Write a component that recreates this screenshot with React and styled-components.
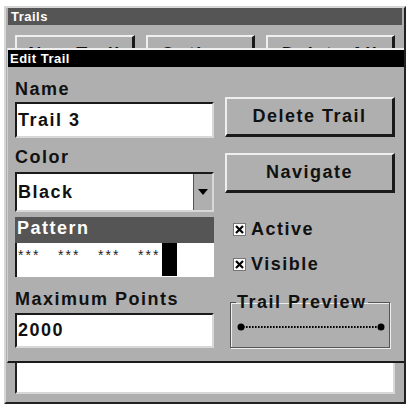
import React from 'react';
import styled, { createGlobalStyle } from 'styled-components';

const GlobalStyle = createGlobalStyle`
  body {
    margin: 0;
    background: #ffffff;
    font-family: 'Liberation Sans', Arial, sans-serif;
    color: #111;
  }
`;

const Window = styled.div`
  position: relative;
  box-sizing: border-box;
  margin: 6px 0 0 4px;
  width: 402px;
  height: 398px;
  background: #afafaf;
  border: 2px solid;
  border-color: #d6d6d6 #222 #222 #d6d6d6;
  padding: 0 2px 8px;
  display: flex;
  flex-direction: column;
`;

const TitleBar = styled.div`
  height: 17px;
  line-height: 17px;
  padding-left: ${(p) => p.$indent || 3}px;
  background: ${(p) => p.$bg || '#555'};
  color: #fff;
  font-size: 13px;
  font-weight: bold;
  letter-spacing: 0.5px;
`;

const ButtonRow = styled.div`
  display: flex;
  gap: 11px;
  margin: 10px 7px 0;
`;

const RaisedButton = styled.div`
  box-sizing: border-box;
  width: ${(p) => p.$w || 170}px;
  height: ${(p) => p.$h || 40}px;
  margin-top: ${(p) => p.$mt || 0}px;
  display: flex;
  align-items: center;
  justify-content: center;
  background: #afafaf;
  border: 2px solid;
  border-color: #eeeeee #1a1a1a #1a1a1a #eeeeee;
  border-right-width: 3px;
  border-bottom-width: 3px;
  font-size: 18px;
  font-weight: bold;
  letter-spacing: 1.5px;
`;

const ListField = styled.div`
  flex: 1;
  margin: 8px 7px 0;
  background: #fff;
  border: 2px solid;
  border-color: #222 #d8d8d8 #d8d8d8 #222;
`;

const Dialog = styled.div`
  position: absolute;
  top: 40px;
  left: 1px;
  box-sizing: border-box;
  width: 397px;
  height: 315px;
  background: #afafaf;
  border-top: 2px solid #eeeeee;
  border-left: 1px solid #cfcfcf;
  border-bottom: 2px solid #1a1a1a;
`;

const DialogBody = styled.div`
  display: grid;
  grid-template-columns: 199px 170px;
  column-gap: 11px;
  padding: 12px 0 0 7px;
`;

const Column = styled.div`
  display: flex;
  flex-direction: column;
`;

const Label = styled.div`
  height: 20px;
  line-height: 20px;
  font-size: 18px;
  font-weight: bold;
  letter-spacing: 1.5px;
  margin-top: ${(p) => p.$mt || 0}px;
`;

const Field = styled.div`
  box-sizing: border-box;
  height: ${(p) => p.$h || 36}px;
  margin-top: ${(p) => p.$mt || 0}px;
  background: #fff;
  border: 2px solid;
  border-color: #1a1a1a #d8d8d8 #d8d8d8 #1a1a1a;
  display: flex;
  align-items: center;
  padding-left: 1px;
  font-size: 18px;
  font-weight: bold;
  letter-spacing: 1.5px;
`;

const SelectArrow = styled.div`
  margin-left: auto;
  align-self: stretch;
  width: 18px;
  background: #afafaf;
  border-left: 1px solid #555;
  display: flex;
  align-items: center;
  justify-content: center;
`;

const PatternHeader = styled.div`
  height: 26px;
  margin-top: 5px;
  padding-left: 2px;
  line-height: 22px;
  background: #555;
  color: #fff;
  font-size: 18px;
  font-weight: bold;
  letter-spacing: 1.5px;
`;

const PatternField = styled.div`
  box-sizing: border-box;
  height: 34px;
  background: #fff;
  border-left: 2px solid #1a1a1a;
  display: flex;
  align-items: flex-start;
  padding-left: 1px;
`;

const Stars = styled.span`
  width: 40px;
  margin-top: 5px;
  font-size: 14px;
  line-height: 14px;
  letter-spacing: 2px;
  color: #222;
`;

const PatternBlock = styled.span`
  width: 15px;
  height: 33px;
  margin-left: -16px;
  background: #000;
`;

const CheckRow = styled.div`
  display: flex;
  align-items: center;
  gap: 5px;
  height: 20px;
  margin: ${(p) => p.$mt || 0}px 0 0 8px;
  font-size: 18px;
  font-weight: bold;
  letter-spacing: 1.5px;
`;

const GroupBox = styled.fieldset`
  box-sizing: border-box;
  width: 160px;
  height: 56px;
  margin: 18px 0 0 5px;
  padding: 0;
  border: 1px solid #555;
  box-shadow: inset 1px 1px 0 #eee, 1px 1px 0 #eee;
  min-width: 0;
`;

const Legend = styled.legend`
  margin-left: 5px;
  padding: 0 1px;
  height: 20px;
  line-height: 20px;
  font-size: 18px;
  font-weight: bold;
  letter-spacing: 1.5px;
`;

const CheckBox = () => (
  <svg width="13" height="13" viewBox="0 0 13 13">
    <rect x="0.5" y="0.5" width="12" height="12" fill="#fff" stroke="#777" />
    <path d="M3 3 L10 10 M10 3 L3 10" stroke="#000" strokeWidth="2.2" />
  </svg>
);

const App = () => (
  <>
    <GlobalStyle />
    <Window>
      <TitleBar>Trails</TitleBar>
      <ButtonRow>
        <RaisedButton $w={120} $h={40}>New Trail</RaisedButton>
        <RaisedButton $w={109} $h={40}>Options</RaisedButton>
        <RaisedButton $w={129} $h={40}>Delete All</RaisedButton>
      </ButtonRow>
      <ListField />

      <Dialog>
        <TitleBar $bg="#000" $indent={2}>Edit Trail</TitleBar>
        <DialogBody>
          <Column>
            <Label>Name</Label>
            <Field $mt={3} $h={36}>Trail 3</Field>
            <Label $mt={9}>Color</Label>
            <Field $mt={5} $h={40}>
              Black
              <SelectArrow>
                <svg width="10" height="6" viewBox="0 0 10 6">
                  <path d="M0 0 H10 L5 6 Z" fill="#000" />
                </svg>
              </SelectArrow>
            </Field>
            <PatternHeader>Pattern</PatternHeader>
            <PatternField>
              <Stars>***</Stars>
              <Stars>***</Stars>
              <Stars>***</Stars>
              <Stars>***</Stars>
              <PatternBlock />
            </PatternField>
            <Label $mt={12}>Maximum Points</Label>
            <Field $mt={4} $h={35}>2000</Field>
          </Column>

          <Column>
            <RaisedButton $mt={18}>Delete Trail</RaisedButton>
            <RaisedButton $mt={16}>Navigate</RaisedButton>
            <CheckRow $mt={26}>
              <CheckBox />
              Active
            </CheckRow>
            <CheckRow $mt={15}>
              <CheckBox />
              Visible
            </CheckRow>
            <GroupBox>
              <Legend>Trail Preview</Legend>
              <svg width="158" height="30" viewBox="0 0 158 30">
                <line x1="12" y1="15" x2="148" y2="15" stroke="#000" strokeWidth="2" strokeDasharray="1.6 1.4" />
                <circle cx="10" cy="15" r="3.5" fill="#000" />
                <circle cx="150" cy="15" r="3.5" fill="#000" />
              </svg>
            </GroupBox>
          </Column>
        </DialogBody>
      </Dialog>
    </Window>
  </>
);

export default App;
